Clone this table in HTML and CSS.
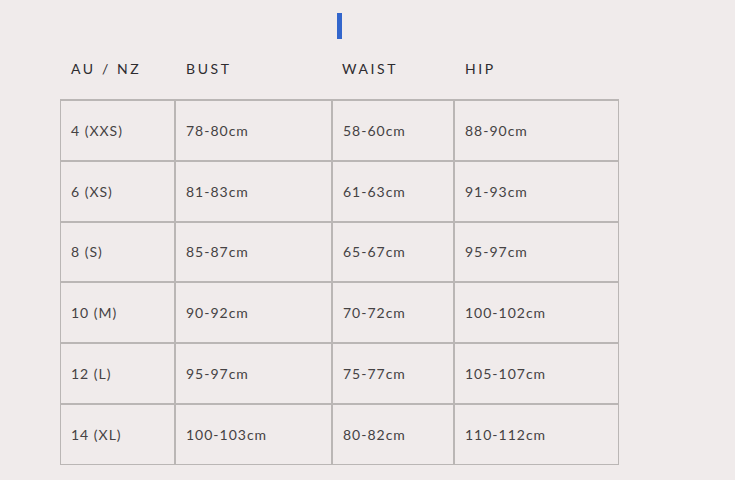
FILE: index.html
```html
<!DOCTYPE html>
<html>
<head>
<meta charset="utf-8">
<link rel="stylesheet" href="styles.css">
</head>
<body>
<div class="page">
  <div class="caret"></div>
  <table class="sizes">
    <thead>
      <tr>
        <th class="c1">AU / NZ</th>
        <th class="c2">BUST</th>
        <th class="c3">WAIST</th>
        <th class="c4">HIP</th>
      </tr>
    </thead>
    <tbody>
      <tr><td>4 (XXS)</td><td>78-80cm</td><td>58-60cm</td><td>88-90cm</td></tr>
      <tr><td>6 (XS)</td><td>81-83cm</td><td>61-63cm</td><td>91-93cm</td></tr>
      <tr><td>8 (S)</td><td>85-87cm</td><td>65-67cm</td><td>95-97cm</td></tr>
      <tr><td>10 (M)</td><td>90-92cm</td><td>70-72cm</td><td>100-102cm</td></tr>
      <tr><td>12 (L)</td><td>95-97cm</td><td>75-77cm</td><td>105-107cm</td></tr>
      <tr><td>14 (XL)</td><td>100-103cm</td><td>80-82cm</td><td>110-112cm</td></tr>
    </tbody>
  </table>
</div>
</body>
</html>
```

FILE: styles.css
```css
html, body {
  margin: 0;
  padding: 0;
  background: #f0ebeb;
}
.page {
  padding-left: 60px;
  padding-top: 13px;
  font-family: "Lato", "Noto Sans", sans-serif;
  color: #454243;
}
.caret {
  width: 5px;
  height: 26px;
  margin-left: 277px;
  background: #3366cc;
}
.sizes {
  border-collapse: separate;
  border-spacing: 0;
  table-layout: fixed;
  width: 559px;
}
.sizes th {
  height: 59px;
  padding: 0 0 1px 10px;
  text-align: left;
  font-weight: 400;
  font-size: 14px;
  letter-spacing: 2.6px;
  border-bottom: 1px solid #bab6b5;
  color: #2e2c30;
}
.sizes .c1 { width: 104px; padding-left: 11px; }
.sizes .c2 { width: 146px; padding-left: 11px; }
.sizes .c3 { width: 112px; }
.sizes .c4 { width: 154px; padding-left: 11px; }
.sizes td {
  height: 58.8px;
  padding: 0 0 0 10px;
  border: 1px solid #bab6b5;
  font-size: 14px;
  letter-spacing: 1px;
  vertical-align: middle;
}
```
